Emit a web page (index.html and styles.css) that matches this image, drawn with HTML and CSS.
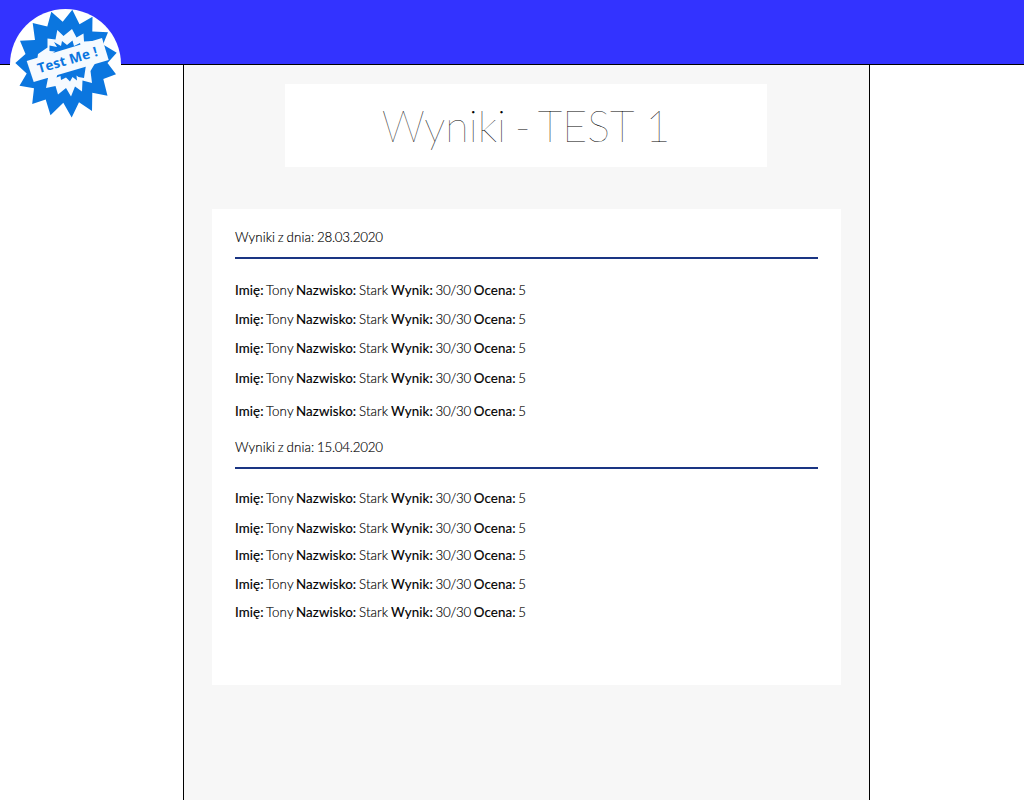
FILE: index.html
```html
<!DOCTYPE html>
<html lang="pl">
<head>
<meta charset="utf-8">
<title>Wyniki - TEST 1</title>
<link rel="stylesheet" href="styles.css">
</head>
<body>
<header class="topbar">
  <svg class="logo" viewBox="10 9 111 111" role="img" aria-label="Test Me!">
    <circle cx="65.5" cy="64.5" r="55.5" fill="#fff"/>
    <path fill="#0b76df" d="M72.3 9.7 79.5 24.3 92.5 16.7 92.3 31.5 108 32.3 103 44.5 116.7 52.7 107.5 63 116 74.3 103.3 79 107.5 95.7 92.3 92.7 92 111 79 102.3 71.7 117.5 63.3 102.7 50.5 115.3 45.7 99.5 32.2 104 34 88.3 19.5 85.7 26.7 73.5 15.3 63 25.5 54 20 40.7 35 40 32.7 23 47.3 26.5 51.3 11.7 62.7 21.7Z"/>
    <path fill="#f5faff" d="M72 29 76.5 37.5 83.5 33.5 84 41.5 92.5 41 97 60 90.5 71 92 83 82.5 80.5 82 91.5 75 86.5 71 96.5 66 88 58 94.5 55.5 86 46 88 48 78 35 76 38 54 47.5 47.5 47.5 38.5 55.5 39.5 57.3 30 63.5 36Z"/>
    <path fill="#0b76df" d="M49.5 45.5 57 47 54 42 61 46 62 41 67 45 72.5 40.5 74 46 80 43 86 65 84 78 78.5 77 76.5 75.5 77 80.5 72.5 77 70 81.5 66 77.5 61 80 60.5 76 56.5 77.5 58 73 49 56 55 51.5 49.5 51Z"/>
    <path fill="#f5faff" d="M26.7 61 102 38 108.7 60 33.7 82Z"/>
    <text class="logo-text" x="39" y="73.3" transform="rotate(-16.5 39 73.3)" textLength="62">Test Me !</text>
  </svg>
</header>
<main class="column">
  <h1 class="title">Wyniki - <span class="name">TEST</span> 1</h1>
  <section class="results">
    <h2 class="date">Wyniki z dnia: <span class="num">28.03.2020</span></h2>
    <ul class="list list-first">
      <li><b>Imię:</b> Tony <b>Nazwisko:</b> Stark <b>Wynik:</b> <span class="num">30/30</span> <b>Ocena:</b> 5</li>
      <li><b>Imię:</b> Tony <b>Nazwisko:</b> Stark <b>Wynik:</b> <span class="num">30/30</span> <b>Ocena:</b> 5</li>
      <li><b>Imię:</b> Tony <b>Nazwisko:</b> Stark <b>Wynik:</b> <span class="num">30/30</span> <b>Ocena:</b> 5</li>
      <li><b>Imię:</b> Tony <b>Nazwisko:</b> Stark <b>Wynik:</b> <span class="num">30/30</span> <b>Ocena:</b> 5</li>
      <li><b>Imię:</b> Tony <b>Nazwisko:</b> Stark <b>Wynik:</b> <span class="num">30/30</span> <b>Ocena:</b> 5</li>
    </ul>
    <h2 class="date">Wyniki z dnia: <span class="num">15.04.2020</span></h2>
    <ul class="list list-second">
      <li><b>Imię:</b> Tony <b>Nazwisko:</b> Stark <b>Wynik:</b> <span class="num">30/30</span> <b>Ocena:</b> 5</li>
      <li><b>Imię:</b> Tony <b>Nazwisko:</b> Stark <b>Wynik:</b> <span class="num">30/30</span> <b>Ocena:</b> 5</li>
      <li><b>Imię:</b> Tony <b>Nazwisko:</b> Stark <b>Wynik:</b> <span class="num">30/30</span> <b>Ocena:</b> 5</li>
      <li><b>Imię:</b> Tony <b>Nazwisko:</b> Stark <b>Wynik:</b> <span class="num">30/30</span> <b>Ocena:</b> 5</li>
      <li><b>Imię:</b> Tony <b>Nazwisko:</b> Stark <b>Wynik:</b> <span class="num">30/30</span> <b>Ocena:</b> 5</li>
    </ul>
  </section>
</main>
</body>
</html>
```
FILE: styles.css
```css
* { box-sizing: border-box; }
body {
  margin: 0;
  height: 800px;
  display: flex;
  flex-direction: column;
  overflow: hidden;
  background: #fff;
  color: #000;
  font-family: Lato, sans-serif;
}
.topbar {
  position: relative;
  flex: none;
  height: 65px;
  background: #3333ff;
  border-bottom: 1px solid #000;
}
.logo {
  position: absolute;
  left: 10px;
  top: 9px;
  width: 111px;
  height: 111px;
}
.logo-text {
  font: 700 13.5px "Open Sans", sans-serif;
  fill: #0b76df;
}
.column {
  flex: 1;
  width: 687px;
  margin-left: 183px;
  padding: 19px 28px 0;
  background: #f7f7f7;
  border: solid #000;
  border-width: 0 1px;
}
.title {
  width: 482px;
  height: 83px;
  margin: 0 0 42px 73px;
  background: #fff;
  font-size: 43px;
  font-weight: 100;
  line-height: 84px;
  text-align: center;
  word-spacing: -3.3px;
}
.name { margin: 0 2px 0 -2px; }
.results {
  height: 476px;
  padding: 18px 23px 0;
  background: #fff;
  font-size: 13.33px;
  line-height: 20px;
  font-weight: 300;
  letter-spacing: 0.08px;
  word-spacing: -1px;
  -webkit-text-stroke: 0.15px #000;
}
.results b { font-weight: 400; letter-spacing: 0.1px; }
.num { letter-spacing: -0.23px; }
.date {
  height: 32px;
  margin: 0;
  border-bottom: 2px solid #1a3583;
  font-size: inherit;
  font-weight: inherit;
}
.list {
  display: grid;
  list-style: none;
  margin: 0;
  padding: 0;
}
.list-first {
  padding: 21px 0 16px;
  grid-template-rows: 29px 29px 30px 33px 20px;
}
.list-second {
  padding-top: 19px;
  grid-template-rows: 30px 27px 29px 28px 20px;
}
```
